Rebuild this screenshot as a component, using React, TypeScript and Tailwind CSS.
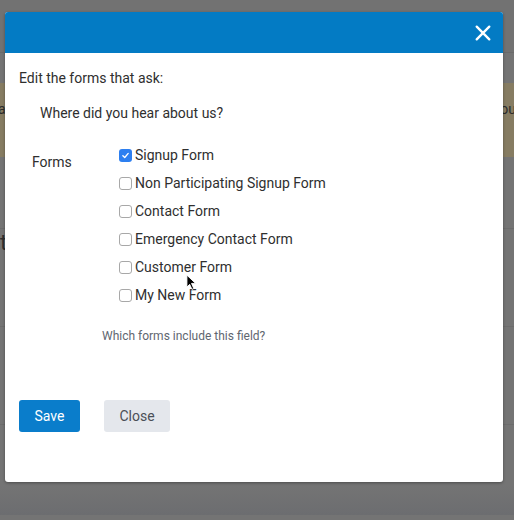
const forms = [
  { id: 1, name: 'Signup Form', checked: true },
  { id: 2, name: 'Non Participating Signup Form', checked: false },
  { id: 3, name: 'Contact Form', checked: false },
  { id: 4, name: 'Emergency Contact Form', checked: false },
  { id: 5, name: 'Customer Form', checked: false },
  { id: 6, name: 'My New Form', checked: false },
];

function Checkbox({ checked }: { checked: boolean }) {
  if (checked) {
    return (
      <span className="flex h-[13px] w-[13px] items-center justify-center rounded-[3px] bg-[#2d7ff0]">
        <svg viewBox="0 0 12 12" className="h-[9px] w-[9px]">
          <path d="M2.5 6.2 L5 8.6 L9.6 3.2" fill="none" stroke="white" strokeWidth="1.8" strokeLinecap="round" strokeLinejoin="round" />
        </svg>
      </span>
    );
  }
  return <span className="h-[13px] w-[13px] rounded-[3px] border border-[#a8a8a8] bg-white" />;
}

export default function App() {
  return (
    <div className="relative h-[520px] w-[514px] overflow-hidden bg-[#747474] font-['Roboto',sans-serif]">
      {/* dimmed page behind the dialog */}
      <div className="h-[53px] border-b border-[#6a6a6a] bg-[#727272]" />
      <div className="h-[30px]" />
      <div className="flex h-[74px] items-start justify-between bg-[#867c62] pt-[16px] text-[14px] text-[#2b2b2b]">
        <span className="-ml-[2px]">ai</span>
        <span className="-mr-[2px]">ou</span>
      </div>
      <div className="h-[72px] border-b border-[#6c6c6c]" />
      <div className="text-[22px] leading-[28px] text-[#2e2e2e]">t</div>
      <div className="h-[70px] border-b border-[#6c6c6c]" />
      <div className="h-[98px] border-b border-[#6c6c6c]" />
      <div className="h-[60px]" />
      <div className="h-[30px] bg-gradient-to-b from-[#747474] to-[#6c6d70]" />

      {/* dialog */}
      <div className="absolute left-[5px] top-[12px] flex h-[470px] w-[498px] flex-col overflow-hidden rounded-[3px] bg-white shadow-[0_1px_3px_rgba(0,0,0,0.35)]">
        <div className="flex h-[41px] items-center justify-end bg-[#037bc4] pr-[11px]">
          <svg viewBox="0 0 20 20" className="h-[18px] w-[18px]">
            <path d="M3 3 L17 17 M17 3 L3 17" stroke="white" strokeWidth="2.6" strokeLinecap="round" />
          </svg>
        </div>
        <div className="flex flex-col px-[14px] text-[14px] text-[#2f2f2f]">
          <p className="mt-[16px] leading-[18px]">Edit the forms that ask:</p>
          <p className="ml-[21px] mt-[17px] leading-[18px]">Where did you hear about us?</p>
          <div className="mt-[19px] flex">
            <span className="ml-[13px] mt-[12px] w-[87px] leading-[18px]">Forms</span>
            <div className="flex flex-col">
              {forms.map((f) => (
                <label key={f.id} className="flex h-[28px] items-center gap-[3px]">
                  <Checkbox checked={f.checked} />
                  <span className="leading-[18px]">{f.name}</span>
                </label>
              ))}
            </div>
          </div>
          <p className="ml-[83px] mt-[19px] text-[12px] leading-[16px] text-[#5f6670]">Which forms include this field?</p>
          <div className="mt-[56px] flex gap-[24px]">
            <button className="h-[32px] w-[61px] rounded-[3px] bg-[#0a7dcb] text-[14px] text-white">Save</button>
            <button className="h-[32px] w-[66px] rounded-[3px] bg-[#e4e7ec] text-[14px] text-[#4a4f57]">Close</button>
          </div>
        </div>
      </div>

      {/* mouse pointer */}
      <svg viewBox="0 0 12 18" className="absolute left-[186px] top-[274px] h-[17px] w-[11px]">
        <path d="M1 1 L1 14 L4 11 L6.5 16.5 L8.5 15.5 L6 10 L10.5 10 Z" fill="black" stroke="white" strokeWidth="1" />
      </svg>
    </div>
  );
}
